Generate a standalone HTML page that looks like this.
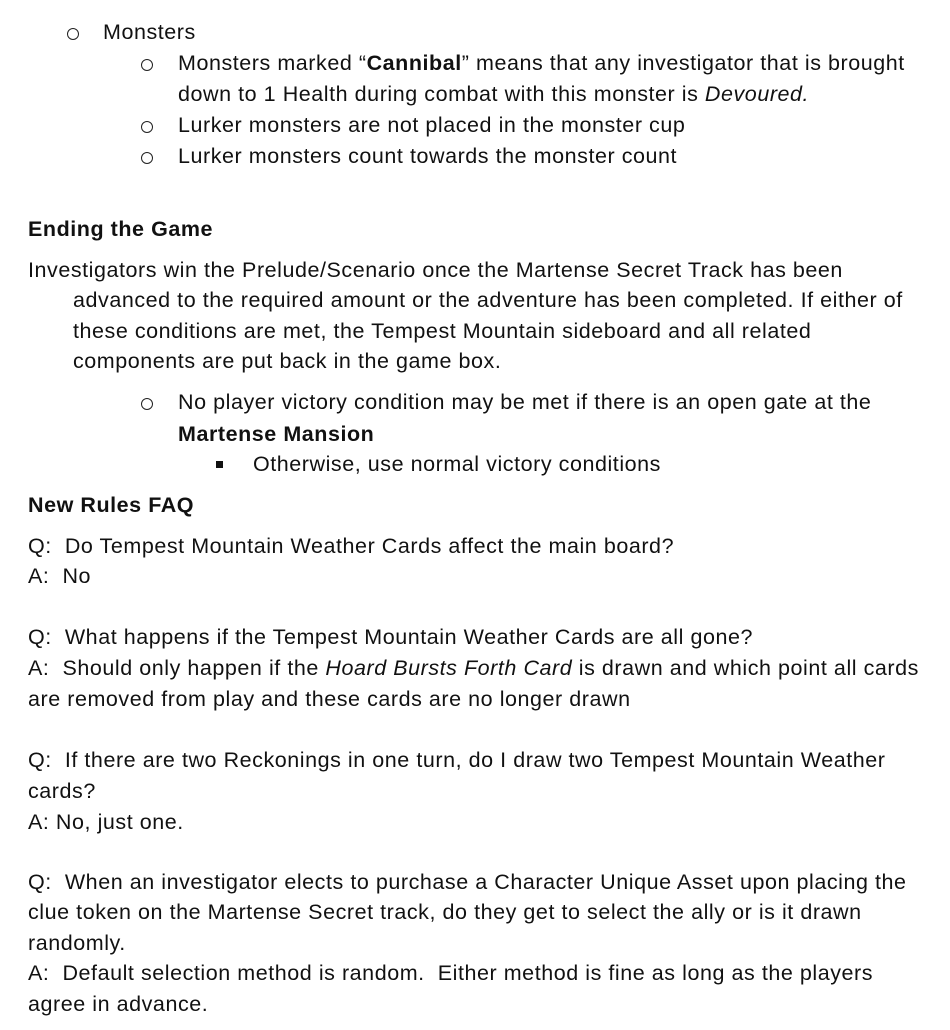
<!DOCTYPE html>
<html><head><meta charset="utf-8"><style>
body{margin:0;width:950px;height:1030px;background:#fff;font-family:"Liberation Sans",sans-serif;font-size:21.5px;letter-spacing:0.55px;color:#111;position:relative;overflow:hidden}
.l{position:absolute;white-space:nowrap;line-height:24px;height:24px}
.o{position:absolute;width:10px;height:10px;border:1.3px solid #222;border-radius:50%}
.sq{position:absolute;width:7px;height:7px;background:#111}
b{font-weight:bold}
</style></head><body>
<div class="o" style="left:67px;top:28px"></div><div class="l" style="left:103px;top:20px">Monsters</div>
<div class="o" style="left:141px;top:59px"></div><div class="l" style="left:178px;top:51px">Monsters marked “<b>Cannibal</b>” means that any investigator that is brought</div>
<div class="l" style="left:178px;top:82px">down to 1 Health during combat with this monster is <i>Devoured.</i></div>
<div class="o" style="left:141px;top:121px"></div><div class="l" style="left:178px;top:113px">Lurker monsters are not placed in the monster cup</div>
<div class="o" style="left:141px;top:152px"></div><div class="l" style="left:178px;top:144px">Lurker monsters count towards the monster count</div>
<div class="l" style="left:28px;top:217px"><b>Ending the Game</b></div>
<div class="l" style="left:28px;top:258px">Investigators win the Prelude/Scenario once the Martense Secret Track has been</div>
<div class="l" style="left:73px;top:288px">advanced to the required amount or the adventure has been completed. If either of</div>
<div class="l" style="left:73px;top:319px">these conditions are met, the Tempest Mountain sideboard and all related</div>
<div class="l" style="left:73px;top:349px">components are put back in the game box.</div>
<div class="o" style="left:141px;top:398px"></div><div class="l" style="left:178px;top:390px">No player victory condition may be met if there is an open gate at the</div>
<div class="l" style="left:178px;top:422px"><b>Martense Mansion</b></div>
<div class="sq" style="left:216px;top:461px"></div><div class="l" style="left:253px;top:452px">Otherwise, use normal victory conditions</div>
<div class="l" style="left:28px;top:493px"><b>New Rules FAQ</b></div>
<div class="l" style="left:28px;top:534px">Q:&nbsp; Do Tempest Mountain Weather Cards affect the main board?</div>
<div class="l" style="left:28px;top:564px">A:&nbsp; No</div>
<div class="l" style="left:28px;top:625px">Q:&nbsp; What happens if the Tempest Mountain Weather Cards are all gone?</div>
<div class="l" style="left:28px;top:656px">A:&nbsp; Should only happen if the <i>Hoard Bursts Forth Card</i> is drawn and which point all cards</div>
<div class="l" style="left:28px;top:687px">are removed from play and these cards are no longer drawn</div>
<div class="l" style="left:28px;top:748px">Q:&nbsp; If there are two Reckonings in one turn, do I draw two Tempest Mountain Weather</div>
<div class="l" style="left:28px;top:779px">cards?</div>
<div class="l" style="left:28px;top:810px">A: No, just one.</div>
<div class="l" style="left:28px;top:870px">Q:&nbsp; When an investigator elects to purchase a Character Unique Asset upon placing the</div>
<div class="l" style="left:28px;top:900px">clue token on the Martense Secret track, do they get to select the ally or is it drawn</div>
<div class="l" style="left:28px;top:931px">randomly.</div>
<div class="l" style="left:28px;top:961px">A:&nbsp; Default selection method is random.&nbsp; Either method is fine as long as the players</div>
<div class="l" style="left:28px;top:992px">agree in advance.</div>
</body></html>
